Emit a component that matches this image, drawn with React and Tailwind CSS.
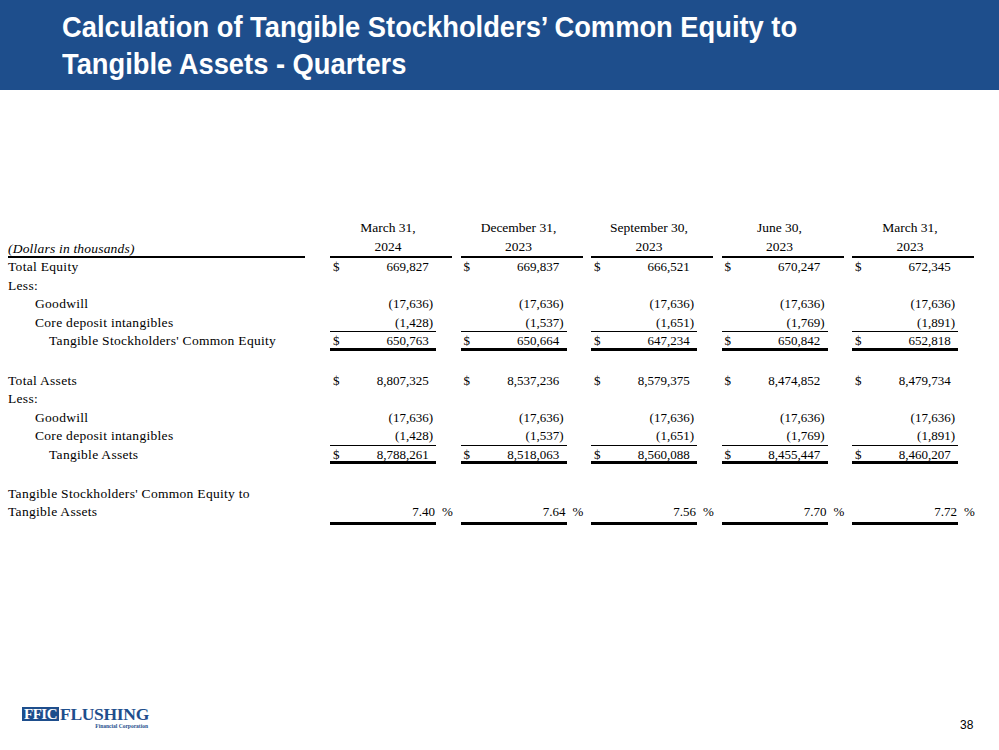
const cols = ['March 31,|2024', 'December 31,|2023', 'September 30,|2023', 'June 30,|2023', 'March 31,|2023']

const equity = {
  total: ['669,827', '669,837', '666,521', '670,247', '672,345'],
  goodwill: ['(17,636)', '(17,636)', '(17,636)', '(17,636)', '(17,636)'],
  cdi: ['(1,428)', '(1,537)', '(1,651)', '(1,769)', '(1,891)'],
  tangible: ['650,763', '650,664', '647,234', '650,842', '652,818'],
}

const assets = {
  total: ['8,807,325', '8,537,236', '8,579,375', '8,474,852', '8,479,734'],
  goodwill: ['(17,636)', '(17,636)', '(17,636)', '(17,636)', '(17,636)'],
  cdi: ['(1,428)', '(1,537)', '(1,651)', '(1,769)', '(1,891)'],
  tangible: ['8,788,261', '8,518,063', '8,560,088', '8,455,447', '8,460,207'],
}

const ratios = ['7.40', '7.64', '7.56', '7.70', '7.72']

function Num({ v }) {
  // accounting style: positives padded by the width of a closing paren
  if (v.startsWith('(')) return <span>{v}</span>
  return (
    <span>
      {v}
      <span className="invisible">)</span>
    </span>
  )
}

function Row({ label, indent = 'pl-[8px]', values, dollar, line, h = 'h-[18.5px]' }) {
  return (
    <div className={`flex ${h} leading-[18.5px]`}>
      <div className={`w-[330px] ${indent} text-[13.5px] tracking-[0.3px] whitespace-nowrap`}>{label}</div>
      {(values || ['', '', '', '', '']).map((v, i) => (
        <div key={i} className="w-[130.5px] flex">
          <div
            className={`w-[106px] flex justify-between pl-[3px] pr-[3px] ${
              line === 'thin' ? 'border-b border-black' : line === 'thick' ? 'border-b-[3px] border-black' : ''
            }`}
          >
            <span>{dollar && v ? '$' : ''}</span>
            {v ? <Num v={v} /> : <span />}
          </div>
        </div>
      ))}
    </div>
  )
}

function Logo() {
  return (
    <div className="flex flex-col items-start" style={{ fontFamily: '"Liberation Serif", serif' }}>
      <div className="flex items-center h-[14px]">
        <div className="bg-[#1e4e8c] text-white font-bold text-[15px] leading-[14px] h-[14px] px-[2px] tracking-[-0.5px]">
          FFIC
        </div>
        <div className="text-[#1e4e8c] font-bold text-[17.5px] leading-[14px] tracking-[-0.3px] ml-[1px]">FLUSHING</div>
      </div>
      <div className="self-end text-[#1e4e8c] font-bold text-[5.5px] leading-[6px] mt-[2px] pr-[1px]">
        Financial Corporation
      </div>
    </div>
  )
}

export default function App() {
  return (
    <div className="w-[999px] h-[750px] bg-white relative overflow-hidden">
      {/* Title band */}
      <div className="h-[90px] bg-[#1e4e8c] pl-[62px] pt-[8px]">
        <h1
          className="inline-block whitespace-nowrap text-white font-bold text-[30px] leading-[37px] scale-x-[0.91] origin-left"
          style={{ fontFamily: '"Liberation Sans", Arial, sans-serif' }}
        >
          Calculation of Tangible Stockholders’ Common Equity to
          <br />
          Tangible Assets - Quarters
        </h1>
      </div>

      {/* Table */}
      <div className="pt-[129px] text-[13px] text-black" style={{ fontFamily: '"Liberation Serif", "Times New Roman", serif' }}>
        {/* header */}
        <div className="flex">
          <div className="w-[330px] pl-[8px] flex items-end">
            <div className="w-[297px] border-b-2 border-black italic text-[13.5px] tracking-[0.2px] leading-[18.5px] h-[18.5px]">
              (Dollars in thousands)
            </div>
          </div>
          {cols.map((c) => {
            const [a, b] = c.split('|')
            return (
              <div key={c} className="w-[130.5px]">
                <div className="w-[122px] border-b-2 border-black text-center leading-[18.5px] text-[13.5px]">
                  <div className="h-[18.5px] pr-[6px]">{a}</div>
                  <div className="h-[18.5px] pr-[6px]">{b}</div>
                </div>
              </div>
            )
          })}
        </div>

        <Row label="Total Equity" values={equity.total} dollar />
        <Row label="Less:" />
        <Row label="Goodwill" indent="pl-[35px]" values={equity.goodwill} />
        <Row label="Core deposit intangibles" indent="pl-[35px]" values={equity.cdi} line="thin" />
        <Row label="Tangible Stockholders' Common Equity" indent="pl-[49px]" values={equity.tangible} dollar line="thick" />

        <div className="h-[21px]" />

        <Row label="Total Assets" values={assets.total} dollar />
        <Row label="Less:" />
        <Row label="Goodwill" indent="pl-[35px]" values={assets.goodwill} />
        <Row label="Core deposit intangibles" indent="pl-[35px]" values={assets.cdi} line="thin" />
        <Row label="Tangible Assets" indent="pl-[49px]" values={assets.tangible} dollar line="thick" />

        <div className="h-[20.5px]" />

        <div className="h-[18.5px] leading-[18.5px] pl-[8px] text-[13.5px] tracking-[0.3px]">
          Tangible Stockholders' Common Equity to
        </div>
        <div className="flex h-[22px] leading-[18.5px]">
          <div className="w-[330px] pl-[8px] text-[13.5px] tracking-[0.3px]">Tangible Assets</div>
          {ratios.map((r) => (
            <div key={r} className="w-[130.5px] flex">
              <div className="w-[106px] h-[22px] border-b-[3px] border-black text-right pr-[1px]">{r}</div>
              <div className="pl-[6px]">%</div>
            </div>
          ))}
        </div>
      </div>

      {/* Footer */}
      <div className="absolute left-[22px] top-[707px]">
        <Logo />
      </div>
      <div
        className="absolute left-[960px] top-[716px] text-[12px] text-black"
        style={{ fontFamily: '"Liberation Sans", Arial, sans-serif' }}
      >
        38
      </div>
    </div>
  )
}
